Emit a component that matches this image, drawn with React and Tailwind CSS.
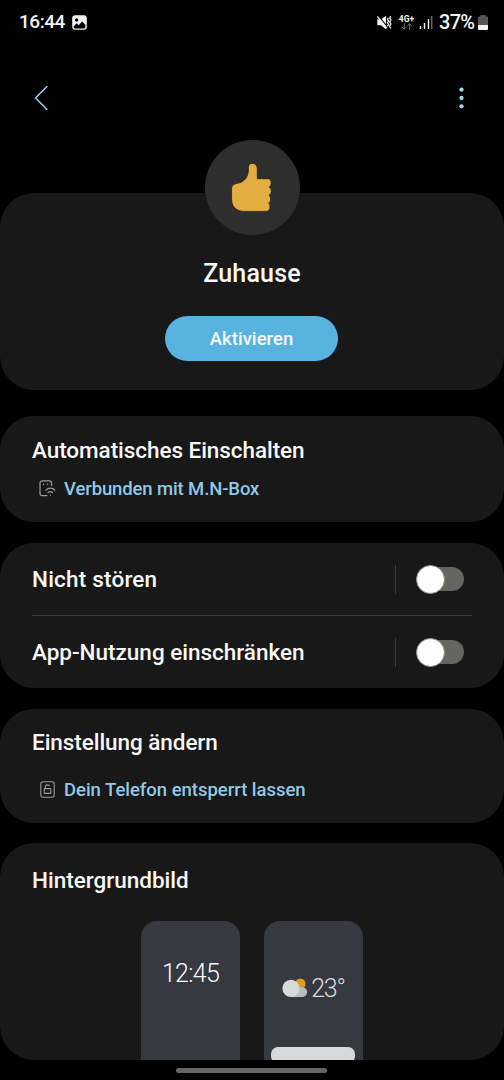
import React from "react";

function StatusBar() {
  return (
    <header className="flex h-[44px] items-center justify-between pl-[19px] pr-[16px] text-[#f4f4f4]">
      <div className="flex items-center gap-[7px]">
        <span className="w-[46px] whitespace-nowrap text-[19px] leading-[24px] font-medium tracking-[-0.450px]">16:44</span>
        <svg className="h-[15px] w-[15px]" viewBox="0 0 15 15">
          <rect x="0.2" y="0.2" width="14.6" height="14.6" rx="3" fill="#f4f4f4" />
          <circle cx="4.6" cy="5" r="1.7" fill="#000" />
          <path d="M1.6 11.4 4.6 8.2l2.200 2L10 6.600l3.400 3.200v2.200a1.4 1.4 0 0 1-1.4 1.4H3a1.4 1.4 0 0 1-1.4-1.4Z" fill="#000" />
        </svg>
      </div>
      <div className="flex items-center">
        <svg className="h-[15px] w-[15px]" viewBox="0 0 15 15">
          <path d="M0.3 4.6H3.8L9 0.8V14.200L4 10.200H0.3Z" fill="#f4f4f4" />
          <path d="M1.300 0.600 10.600 12.200" stroke="#000" strokeWidth="1.1" />
          <path d="M0.4 1.400 10 13.400" stroke="#f4f4f4" strokeWidth="1.3" />
          <path d="M11.200 2.800 10.500 4.400l1 1.600-1 1.700 1 1.700-1 1.800M13.800 1.200l-1.100 1.800 1.200 2-1.200 2 1.200 2-1.200 2 1.100 2.400" fill="none" stroke="#f4f4f4" strokeWidth="1.3" />
        </svg>
        <div className="ml-[6px] flex w-[17px] flex-col items-center">
          <span className="text-[8.500px] leading-[8px] font-bold">4G+</span>
          <svg className="h-[7px] w-[12px]" viewBox="0 0 12 7">
            <path d="M3.2 0v6M0.8 3.8 3.2 6.2 5.6 3.8M8.6 7V1M6.2 3.2 8.6.8 11 3.2" fill="none" stroke="#777" strokeWidth="1" />
          </svg>
        </div>
        <svg className="ml-[4px] h-[14px] w-[14px]" viewBox="0 0 14 14">
          <path d="M1.5 11V14M5.500 8V14M9.500 4V14" stroke="#f4f4f4" strokeWidth="1.4" />
          <path d="M12.700 1V14" stroke="#666" strokeWidth="1.5" />
        </svg>
        <span className="ml-[6px] w-[37px] whitespace-nowrap text-[20px] leading-[24px] font-medium tracking-[-0.700px]">37%</span>
        <svg className="ml-[2px] h-[15px] w-[10px]" viewBox="0 0 10 15">
          <path d="M2.5 0h5v1.5H9a1 1 0 0 1 1 1V13.5a1.5 1.5 0 0 1-1.5 1.5h-7A1.5 1.5 0 0 1 0 13.5V2.5a1 1 0 0 1 1-1h1.5Z" fill="#555" />
          <path d="M0 10h10v3.5a1.5 1.5 0 0 1-1.5 1.5h-7A1.5 1.5 0 0 1 0 13.5Z" fill="#f4f4f4" />
        </svg>
      </div>
    </header>
  );
}

function AppBar() {
  return (
    <nav className="flex h-[108px] items-center justify-between pl-[34px] pr-[40px]">
      <svg className="h-[24px] w-[14px]" viewBox="0 0 14 24">
        <path d="M12.8 0.8 1.5 12 12.8 23.2" fill="none" stroke="#9bd0ea" strokeWidth="1.6" strokeLinecap="round" strokeLinejoin="round" />
      </svg>
      <svg className="h-[22px] w-[5px]" viewBox="0 0 5 22">
        <circle cx="2.5" cy="2.7" r="2.15" fill="#a5d5ea" />
        <circle cx="2.5" cy="11" r="2.15" fill="#a5d5ea" />
        <circle cx="2.5" cy="19.3" r="2.15" fill="#a5d5ea" />
      </svg>
    </nav>
  );
}

function ThumbsUp() {
  return (
    <svg className="h-[50px] w-[42px]" viewBox="-0.200 0.500 42 50">
      <path
        d="M21.2.9C24.4.9 26.1 3.2 26.1 6.8V16.2H36.5C39 16.2 40 18 40 20.3 40 22.6 39.2 24 37.9 24.5 39.3 25.2 40 26.5 40 28.6 40 30.9 39.1 32.3 37.6 32.8 38.8 33.5 39.4 34.6 39.4 36.5 39.4 38.7 38.6 40 37.3 40.5 38.3 41.1 38.8 42.2 38.8 43.8 38.8 47 37.4 48.9 34.8 48.9H13.5C5 48.9.4 44 .4 37V26.5C.4 22.8 3.2 21.4 7.3 20.6 13.8 19.3 17.2 13.5 17.2 7.5V4.8C17.2 2.3 18.9.9 21.2.9Z"
        fill="#e4ad41"
        stroke="#22180c"
        strokeWidth="0.7"
      />
    </svg>
  );
}

function WifiDeviceIcon() {
  return (
    <svg className="h-[17px] w-[17px]" viewBox="0 0 17 17" fill="none" stroke="#9a9a9a" strokeWidth="1.2" strokeLinecap="round">
      <path d="M8 15.700H3.3A2.3 2.3 0 0 1 1 13.4V3.2A2.3 2.3 0 0 1 3.3.9h7A2.3 2.3 0 0 1 12.6 3.2V5.5" />
      <path d="M4.500 4v.4M8.600 4v.4" />
      <path d="M6.9 10.200c2.500-2.900 6.500-2.900 9 0M9 12.700c1.400-1.500 3.400-1.500 4.800 0M11.4 15v.2" />
    </svg>
  );
}

function UnlockIcon() {
  return (
    <svg className="h-[17px] w-[15px]" viewBox="0 0 15 17" fill="none" stroke="#9a9a9a" strokeWidth="1.1" strokeLinejoin="round">
      <rect x="0.8" y="0.8" width="13.4" height="15.4" rx="2.2" />
      <rect x="4.200" y="7.600" width="6.600" height="4.800" rx="0.500" />
      <path d="M5.300 7.600V6C5.300 4.500 6.300 3.900 7.500 3.900S9.500 4.500 9.600 5.200" />
    </svg>
  );
}

function WeatherIcon() {
  return (
    <svg className="h-[20px] w-[26px]" viewBox="0 0 26 20">
      <circle cx="18.3" cy="5.7" r="5.2" fill="#d7a01c" />
      <path d="M9 19h11.3a4.9 4.9 0 0 0 0-9.800H13Z" fill="#b9bbbd" />
      <circle cx="9" cy="10.4" r="8.6" fill="#d8d9da" />
    </svg>
  );
}

function ToggleRow({ label, tracking, className }) {
  return (
    <div className={"flex items-center " + className}>
      <h2 className={"flex-1 whitespace-nowrap text-[22.500px] leading-[28px] font-medium " + tracking}>{label}</h2>
      <div className="h-[29px] w-px bg-[#3a3a3a]" />
      <button className="ml-[20px] mr-[7px] flex h-[29px] w-[49px] items-center" role="switch" aria-checked="false">
        <span className="ml-[4px] flex h-[24px] w-[44px] items-center rounded-full bg-[#65665f]">
          <span className="-ml-[4px] h-[29px] w-[29px] shrink-0 rounded-full border border-[#8c8c86] bg-[#fdfdfd]" />
        </span>
      </button>
    </div>
  );
}

export default function App() {
  return (
    <div className="flex h-[1080px] w-[504px] flex-col overflow-hidden bg-black font-['Roboto',sans-serif] text-[#f8f8f8]">
      <StatusBar />
      <AppBar />
      <main className="mt-[41px] flex flex-col">
        <section className="flex h-[197px] flex-col items-center rounded-[34px] bg-[#181818]">
          <div className="-mt-[53px] flex h-[95px] w-[95px] shrink-0 items-center justify-center rounded-full bg-[#2e2e2e]">
            <ThumbsUp />
          </div>
          <h1 className="mt-[23px] text-[25px] leading-[32px] font-medium tracking-[0.200px]">Zuhause</h1>
          <button className="mt-[26px] mr-px flex h-[45px] w-[173px] items-center justify-center rounded-full bg-[#59b3e0] pt-[2px] text-[18.500px] font-medium tracking-[0.050px]">
            Aktivieren
          </button>
        </section>

        <section className="mt-[26px] flex h-[106px] flex-col rounded-[34px] bg-[#181818] px-[32px] pt-[20px]">
          <h2 className="whitespace-nowrap text-[22.500px] leading-[28px] font-medium tracking-[-0.060px]">Automatisches Einschalten</h2>
          <p className="mt-[12px] flex items-center pl-[7px] text-[#8fc9e6]">
            <WifiDeviceIcon />
            <span className="ml-[8px] whitespace-nowrap pt-px text-[18.500px] leading-[24px] font-medium tracking-[-0.120px]">Verbunden mit M.N-Box</span>
          </p>
        </section>

        <section className="mt-[21px] flex h-[145px] flex-col rounded-[34px] bg-[#181818] px-[32px]">
          <ToggleRow label="Nicht stören" tracking="tracking-[0.200px]" className="h-[72px]" />
          <div className="h-px bg-[#3a3a3a]" />
          <ToggleRow label="App-Nutzung einschränken" tracking="tracking-[-0.010px]" className="h-[72px]" />
        </section>

        <section className="mt-[21px] flex h-[114px] flex-col rounded-[34px] bg-[#181818] px-[32px] pt-[19px]">
          <h2 className="whitespace-nowrap text-[22.500px] leading-[28px] font-medium tracking-[-0.060px]">Einstellung ändern</h2>
          <p className="mt-[20px] flex items-center pl-[8px] text-[#8fc9e6]">
            <UnlockIcon />
            <span className="ml-[9px] whitespace-nowrap pt-[2px] text-[18.500px] leading-[24px] font-medium tracking-[-0.030px]">Dein Telefon entsperrt lassen</span>
          </p>
        </section>

        <section className="mt-[20px] flex h-[217px] flex-col overflow-hidden rounded-[34px] bg-[#181818] px-[32px] pt-[23px]">
          <h2 className="whitespace-nowrap text-[22.500px] leading-[28px] font-medium">Hintergrundbild</h2>
          <div className="mt-[27px] flex justify-center gap-[24px]">
            <div className="flex h-[210px] w-[99px] flex-col items-center rounded-[16px] bg-[#363940] pt-[38px]">
              <span className="text-[25px] leading-[30px] font-light tracking-[-0.700px]">12:45</span>
            </div>
            <div className="flex h-[210px] w-[99px] flex-col items-center rounded-[16px] bg-[#363940] pt-[51px]">
              <div className="flex h-[32px] items-center text-[#d8d9da]">
                <WeatherIcon />
                <span className="ml-[3px] pt-px text-[25px] leading-[32px] font-light tracking-[-1.200px]">23°</span>
              </div>
              <div className="mt-[43px] mr-px h-[16px] w-[84px] rounded-[7px] bg-[#d8d9da]" />
            </div>
          </div>
        </section>
      </main>
      <footer className="flex h-[20px] items-center justify-center">
        <div className="mr-px h-[5px] w-[151px] rounded-full bg-[#656565]" />
      </footer>
    </div>
  );
}
